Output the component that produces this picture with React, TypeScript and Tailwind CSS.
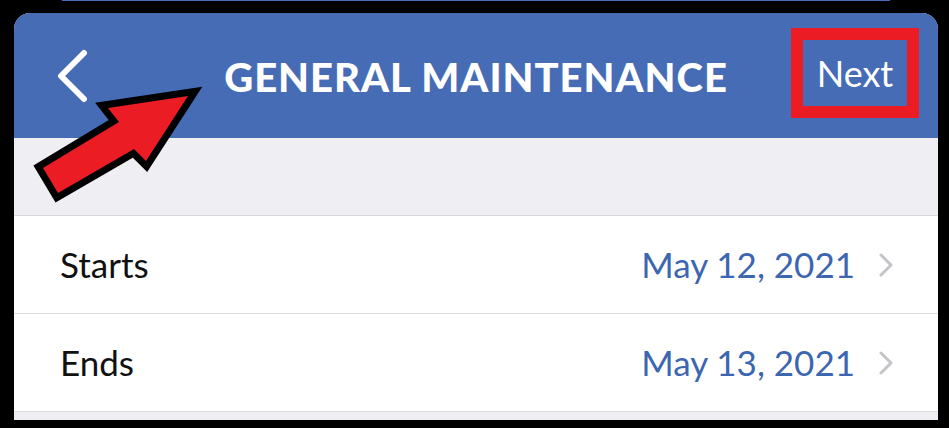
const rows = [
  { label: "Starts", value: "May 12, 2021" },
  { label: "Ends", value: "May 13, 2021" },
];

const BackChevron = () => (
  <svg width="34" height="54" viewBox="0 0 34 54" fill="none">
    <path d="M29 4 L6 27 L29 50" stroke="#fff" strokeWidth="6" strokeLinecap="round" strokeLinejoin="round" />
  </svg>
);

const RowChevron = () => (
  <svg width="14" height="24" viewBox="0 0 14 24" fill="none">
    <path d="M2 2 L12 12 L2 22" stroke="#c5c5c9" strokeWidth="3" strokeLinecap="round" strokeLinejoin="round" />
  </svg>
);

export default function App() {
  return (
    <div className="relative w-[949px] h-[428px] bg-black overflow-hidden" style={{ fontFamily: "Lato, 'Noto Sans', sans-serif" }}>
      <div className="ml-[62px] w-[828px] h-[1px] bg-[#466cb6]" />

      <div className="mt-[12px] ml-[14px] w-[924px] h-[407px] rounded-t-[16px] overflow-hidden bg-[#efeef3] flex flex-col">
        {/* nav bar */}
        <div className="h-[125px] shrink-0 bg-[#466cb6] grid grid-cols-[1fr_auto_1fr] items-center">
          <div className="pl-[41px] flex items-center">
            <BackChevron />
          </div>
          <div className="text-white font-black text-[40px] tracking-[1px] leading-none pt-[2px]">
            GENERAL MAINTENANCE
          </div>
          <div className="flex justify-end pr-[19px] pb-[6px]">
            <div className="w-[128px] h-[90px] border-[12px] border-[#ec1c24] flex items-center justify-center">
              <span className="text-white text-[36px] leading-none">Next</span>
            </div>
          </div>
        </div>

        <div className="h-[78px] shrink-0 border-b border-[#d8d8dc]" />

        <div className="bg-white">
          {rows.map((r) => (
            <div key={r.label} className="h-[98px] flex items-center border-b border-[#dcdce0] pl-[46px] pr-[45px]">
              <span className="text-[35px] text-[#111]">{r.label}</span>
              <span className="ml-auto text-[35px] text-[#3d66b1]">{r.value}</span>
              <span className="ml-[24px] flex items-center">
                <RowChevron />
              </span>
            </div>
          ))}
        </div>
      </div>

      {/* red annotation arrow */}
      <svg className="absolute inset-0 pointer-events-none" width="949" height="428" viewBox="0 0 949 428">
        <polygon
          points="188,96 146,161 134,149 58,193 43,168 119,122 108,108"
          fill="#ec1c24"
          stroke="#000"
          strokeWidth="14"
          strokeLinejoin="miter"
          paintOrder="stroke"
        />
      </svg>
    </div>
  );
}
